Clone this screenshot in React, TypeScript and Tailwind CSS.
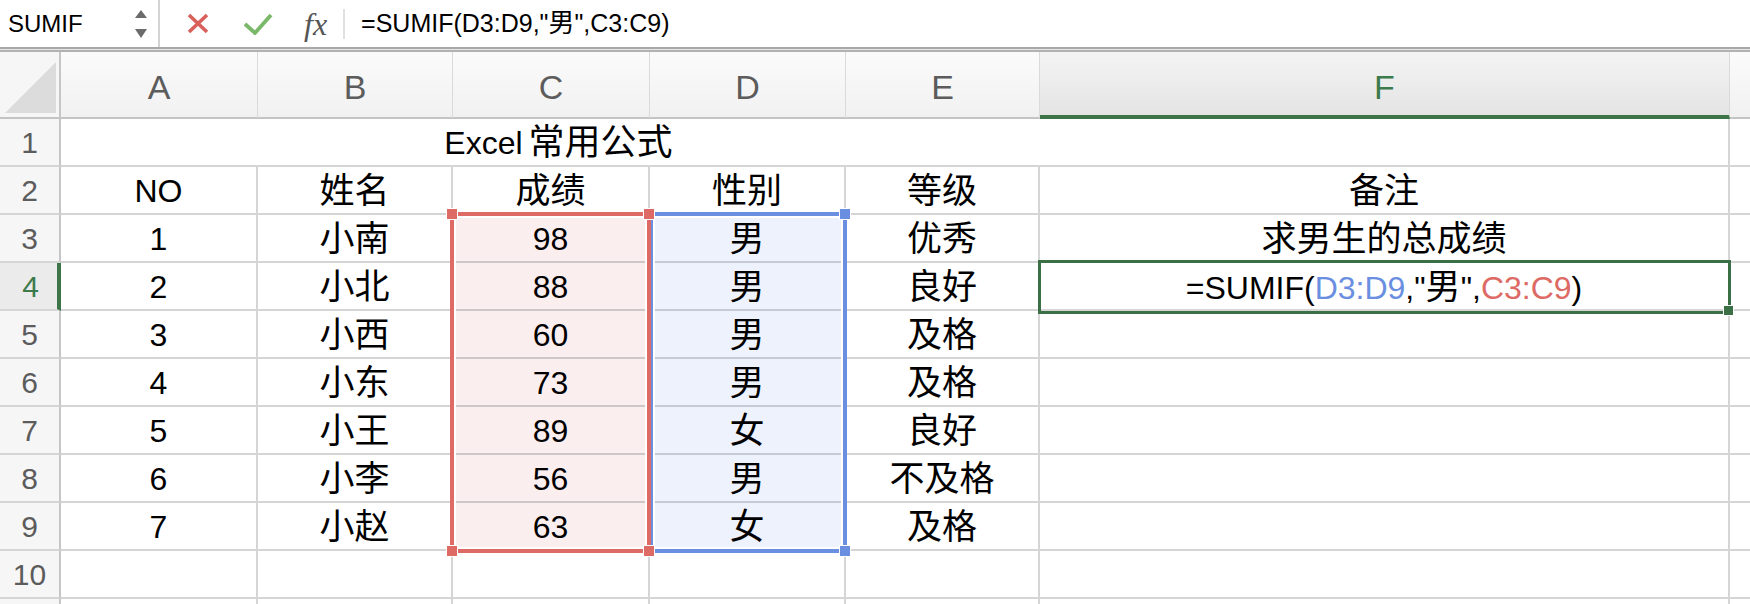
import React from "react";

// Excel 表格截图 — SUMIF 示例

type Row = [string, string, string, string, string, string];

const DATA: Row[] = [
  ["NO", "姓名", "成绩", "性别", "等级", "备注"],
  ["1", "小南", "98", "男", "优秀", "求男生的总成绩"],
  ["2", "小北", "88", "男", "良好", "=SUMIF"],
  ["3", "小西", "60", "男", "及格", ""],
  ["4", "小东", "73", "男", "及格", ""],
  ["5", "小王", "89", "女", "良好", ""],
  ["6", "小李", "56", "男", "不及格", ""],
  ["7", "小赵", "63", "女", "及格", ""],
];

const LETTERS = ["A", "B", "C", "D", "E", "F"];

const CJK = /([\u4e00-\u9fff]+)/;

function Mixed({ text, big }: { text: string; big: string }) {
  const parts = text.split(CJK);
  return (
    <>
      {parts.map((p, i) =>
        CJK.test(p) ? (
          <span key={i} className={big}>
            {p}
          </span>
        ) : (
          p
        )
      )}
    </>
  );
}

function FormulaBar() {
  return (
    <div className="flex h-[47px] items-center bg-white">
      <div className="flex h-full w-[158px] items-center justify-between pl-[8px] pr-[11px]">
        <span className="text-[24px] text-black">SUMIF</span>
        <svg width="12" height="32" viewBox="0 0 12 32">
          <polygon points="0,10 12,10 6,2" fill="#6b6b6b" />
          <polygon points="0,21 12,21 6,30" fill="#6b6b6b" />
        </svg>
      </div>
      <div className="h-full w-[2px] bg-[#d3d3d3]" />
      <svg className="ml-[27px]" width="22" height="21" viewBox="0 0 22 21">
        <path d="M2 2 L20 19 M20 2 L2 19" stroke="#d9605b" strokeWidth="3.6" />
      </svg>
      <svg className="ml-[35px]" width="29" height="22" viewBox="0 0 29 22">
        <path d="M1 11 L11 20 L27 2" stroke="#7bb96a" strokeWidth="3.8" fill="none" />
      </svg>
      <span className="ml-[31px] font-['Liberation_Serif',serif] text-[32px] italic leading-none text-[#555]">
        fx
      </span>
      <div className="ml-[16px] h-[30px] w-[2px] bg-[#e0e0e0]" />
      <span className="ml-[16px] whitespace-pre text-[25px] text-black">
        <Mixed text={'=SUMIF(D3:D9,"男",C3:C9)'} big="text-[26px]" />
      </span>
    </div>
  );
}

function cellBg(col: number, row: number) {
  if (row >= 3 && row <= 9 && col === 2) return "bg-[#fbeeee] border-[#cdc7c7]";
  if (row >= 3 && row <= 9 && col === 3) return "bg-[#eef2fc] border-[#c6cad3]";
  return "bg-white border-[#d5d5d5]";
}

function Formula() {
  return (
    <span className="whitespace-pre">
      =SUMIF(<span className="text-[#6b8fe0]">D3:D9</span>,"<span className="text-[35px]">男</span>",
      <span className="text-[#dd6a64]">C3:C9</span>)
    </span>
  );
}

export default function App() {
  return (
    <div className="h-[604px] w-[1750px] overflow-hidden bg-white font-['Liberation_Sans','Noto_Sans_CJK_SC',sans-serif]">
      <FormulaBar />
      <div className="h-[2px] bg-[#a8a8a8]" />
      <div className="h-[1px] bg-[#e6e6e6]" />
      <div className="h-[2px] bg-[#b2b2b2]" />

      <div className="relative grid grid-cols-[61px_197px_195px_197px_196px_194px_690px_20px] grid-rows-[67px_repeat(10,48px)_5px]">
        {/* header row */}
        <div className="relative border-b-2 border-r-2 border-b-[#c4c4c4] border-r-[#c6c6c6] bg-[#f6f6f6]">
          <svg className="absolute left-[5px] top-[10px]" width="52" height="52" viewBox="0 0 52 52">
            <polygon points="0,51 51,51 51,0" fill="#dcdcdc" />
          </svg>
        </div>
        {LETTERS.map((l) =>
          l === "F" ? (
            <div
              key={l}
              className="flex items-center justify-center border-b-4 border-r border-b-[#3d7549] border-r-[#dadada] bg-gradient-to-b from-[#f4f4f4] to-[#e4e4e4] pt-[8px] text-[34px] text-[#3d7a4c]"
            >
              {l}
            </div>
          ) : (
            <div
              key={l}
              className="flex items-center justify-center border-b-2 border-r border-b-[#c4c4c4] border-r-[#dadada] bg-gradient-to-b from-[#fbfbfb] to-[#f1f1f1] pt-[6px] text-[34px] text-[#5c5c5c]"
            >
              {l}
            </div>
          )
        )}
        <div className="border-b-2 border-b-[#c4c4c4] bg-gradient-to-b from-[#fbfbfb] to-[#f1f1f1]" />

        {/* row 1 */}
        <div className="flex items-center justify-center border-b-2 border-r-2 border-b-[#d6d6d6] border-r-[#c6c6c6] bg-[#f6f6f6] text-[30px] text-[#5c5c5c]">
          1
        </div>
        <div className="col-span-6 flex border-b-2 border-r-2 border-[#d5d5d5]">
          <div className="flex w-[979px] items-center justify-center pl-[16px] pt-[2px] text-[32px] text-black">
            <Mixed text="Excel 常用公式" big="text-[36px] ml-[6px]" />
          </div>
        </div>
        <div className="border-b-2 border-[#d5d5d5]" />

        {/* rows 2-9 */}
        {DATA.map((r, i) => {
          const rowNo = i + 2;
          return (
            <React.Fragment key={rowNo}>
              {rowNo === 4 ? (
                <div className="flex items-center justify-center border-b-2 border-r-4 border-b-[#d6d6d6] border-r-[#3d7549] bg-[#ebebeb] pl-[4px] text-[30px] text-[#3d7a4c]">
                  4
                </div>
              ) : (
                <div className="flex items-center justify-center border-b-2 border-r-2 border-b-[#d6d6d6] border-r-[#c6c6c6] bg-[#f6f6f6] text-[30px] text-[#5c5c5c]">
                  {rowNo}
                </div>
              )}
              {r.map((v, c) => (
                <div
                  key={c}
                  className={`flex items-center justify-center border-b-2 border-r-2 pt-[2px] text-[32px] text-black ${cellBg(c, rowNo)}`}
                >
                  {rowNo === 4 && c === 5 ? <Formula /> : <Mixed text={v} big="text-[35px]" />}
                </div>
              ))}
              <div className="border-b-2 border-[#d5d5d5]" />
            </React.Fragment>
          );
        })}

        {/* row 10 */}
        <div className="flex items-center justify-center border-b-2 border-r-2 border-b-[#d6d6d6] border-r-[#c6c6c6] bg-[#f6f6f6] text-[30px] text-[#5c5c5c]">
          10
        </div>
        {[0, 1, 2, 3, 4, 5].map((c) => (
          <div key={c} className="border-b-2 border-r-2 border-[#d5d5d5]" />
        ))}
        <div className="border-b-2 border-[#d5d5d5]" />

        {/* partial row 11 */}
        <div className="border-r-2 border-r-[#c6c6c6] bg-[#f6f6f6]" />
        {[0, 1, 2, 3, 4, 5].map((c) => (
          <div key={c} className="border-r-2 border-[#d5d5d5]" />
        ))}
        <div />

        {/* range D3:D9 */}
        <div className="absolute left-[649px] top-[160px] h-[341px] w-[198px] border-4 border-[#6a8fe0] shadow-[inset_0_0_0_2px_#fff]" />
        <div className="absolute left-[839px] top-[156px] h-[12px] w-[12px] border border-white bg-[#6a8fe0]" />
        <div className="absolute left-[839px] top-[493px] h-[12px] w-[12px] border border-white bg-[#6a8fe0]" />

        {/* range C3:C9 */}
        <div className="absolute left-[450px] top-[160px] h-[341px] w-[201px] border-4 border-[#dd6a64] shadow-[inset_0_0_0_2px_#fff]" />
        <div className="absolute left-[446px] top-[156px] h-[12px] w-[12px] border border-white bg-[#dd6a64]" />
        <div className="absolute left-[643px] top-[156px] h-[12px] w-[12px] border border-white bg-[#dd6a64]" />
        <div className="absolute left-[446px] top-[493px] h-[12px] w-[12px] border border-white bg-[#dd6a64]" />
        <div className="absolute left-[643px] top-[493px] h-[12px] w-[12px] border border-white bg-[#dd6a64]" />

        {/* active cell F4 */}
        <div className="absolute left-[1038px] top-[208px] h-[54px] w-[693px] border-[3px] border-[#3b7047]" />
        <div className="absolute left-[1723px] top-[253px] h-[11px] w-[11px] border border-white bg-[#3b7047]" />
      </div>
    </div>
  );
}
